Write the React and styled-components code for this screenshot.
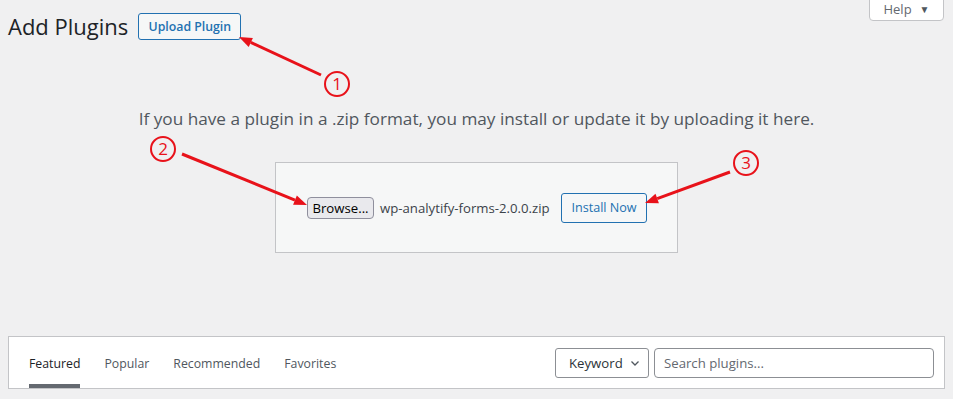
import React from 'react';
import styled, { createGlobalStyle } from 'styled-components';

const GlobalStyle = createGlobalStyle`
	body {
		margin: 0;
		background: #f0f0f1;
		font-family: "Open Sans", "Noto Sans", sans-serif;
		color: #3c434a;
	}
	* {
		box-sizing: border-box;
	}
`;

const Page = styled.div`
	position: relative;
	width: 953px;
	height: 399px;
	overflow: hidden;
	padding: 0 8px;
`;

const HeaderRow = styled.div`
	display: flex;
	align-items: flex-start;
	justify-content: space-between;
`;

const TitleGroup = styled.div`
	display: flex;
	align-items: center;
	gap: 10px;
	margin-top: 13px;
`;

const Title = styled.h1`
	margin: 0;
	font-size: 22px;
	font-weight: 400;
	color: #1d2327;
	line-height: 27px;
`;

const OutlineButton = styled.button`
	font-family: inherit;
	font-size: ${(p) => p.$size || 12.3}px;
	font-weight: ${(p) => (p.$bold ? 600 : 400)};
	color: #2271b1;
	background: #f6f7f7;
	border: 1px solid #2271b1;
	border-radius: 3px;
	width: ${(p) => p.$width}px;
	height: ${(p) => p.$height || 27}px;
	padding: 0;
	white-space: nowrap;
	cursor: pointer;
`;

const HelpTab = styled.button`
	margin-top: -8px;
	margin-right: 1px;
	width: 75px;
	height: 29px;
	padding-top: 6px;
	display: flex;
	align-items: center;
	justify-content: center;
	gap: 8px;
	background: #fff;
	border: 1px solid #c3c4c7;
	border-radius: 0 0 4px 4px;
	font-family: inherit;
	font-size: 13px;
	color: #646970;
`;

const Caret = styled.span`
	font-size: 10px;
	color: #50575e;
`;

const UploadSection = styled.div`
	display: flex;
	flex-direction: column;
	align-items: center;
`;

const UploadHelp = styled.p`
	margin: 67px 0 0;
	font-size: 17.2px;
	line-height: 24px;
	color: #50575e;
	white-space: nowrap;
`;

const UploadForm = styled.form`
	margin-top: 31px;
	width: 403px;
	height: 91px;
	display: flex;
	align-items: center;
	padding: 0 30px 0 31px;
	background: #f6f7f7;
	border: 1px solid #c3c4c7;
`;

const BrowseButton = styled.span`
	width: 67px;
	height: 22px;
	display: flex;
	align-items: center;
	justify-content: center;
	background: #e9e9ed;
	border: 1px solid #8f8f9d;
	border-radius: 4px;
	font-size: 13.2px;
	color: #000;
`;

const FileName = styled.span`
	flex: 1;
	margin-left: 6px;
	font-size: 13.2px;
	color: #3c434a;
	white-space: nowrap;
`;

const FilterBar = styled.div`
	margin-top: 83px;
	height: 53px;
	display: flex;
	align-items: stretch;
	justify-content: space-between;
	padding: 0 10px 0 20px;
	background: #fff;
	border: 1px solid #c3c4c7;
`;

const Tabs = styled.ul`
	display: flex;
	gap: 24px;
	margin: 0;
	padding: 0;
	list-style: none;
`;

const Tab = styled.li`
	display: flex;
	align-items: center;
	padding-top: 1px;
	font-size: 12.3px;
	color: ${(p) => (p.$current ? '#1d2327' : '#50575e')};
	border-bottom: 4px solid ${(p) => (p.$current ? '#646970' : 'transparent')};
	border-top: 4px solid transparent;
`;

const SearchForm = styled.div`
	display: flex;
	align-items: center;
	gap: 5px;
`;

const Select = styled.div`
	width: 94px;
	height: 30px;
	display: flex;
	align-items: center;
	justify-content: space-between;
	padding: 0 8px 0 13px;
	border: 1px solid #8c8f94;
	border-radius: 3px;
	font-size: 13.2px;
	color: #2c3338;
`;

const SearchInput = styled.input`
	width: 280px;
	height: 30px;
	padding: 0 9px;
	border: 1px solid #8c8f94;
	border-radius: 4px;
	font-family: inherit;
	font-size: 13.2px;
	color: #2c3338;
	&::placeholder {
		color: #646970;
	}
`;

const Annotations = styled.svg`
	position: absolute;
	left: 0;
	top: 0;
	pointer-events: none;
`;

const RED = '#e8121a';

const Marker = ({ cx, cy, n }) => (
	<g>
		<circle cx={cx} cy={cy} r={12} fill="none" stroke={RED} strokeWidth={2} />
		<text x={cx} y={cy + 6} textAnchor="middle" fontSize="17" fill={RED} fontFamily="Open Sans, sans-serif">
			{n}
		</text>
	</g>
);

const Arrow = ({ x1, y1, x2, y2 }) => {
	const a = Math.atan2(y2 - y1, x2 - x1);
	const len = 13;
	const w = 5;
	const bx = x2 - len * Math.cos(a);
	const by = y2 - len * Math.sin(a);
	const px = -Math.sin(a) * w;
	const py = Math.cos(a) * w;
	return (
		<g>
			<line x1={x1} y1={y1} x2={bx} y2={by} stroke={RED} strokeWidth={3} />
			<polygon points={`${x2},${y2} ${bx + px},${by + py} ${bx - px},${by - py}`} fill={RED} />
		</g>
	);
};

const App = () => {
	return (
		<Page>
			<GlobalStyle />
			<HeaderRow>
				<TitleGroup>
					<Title>Add Plugins</Title>
					<OutlineButton $bold $width={103}>Upload Plugin</OutlineButton>
				</TitleGroup>
				<HelpTab>
					Help <Caret>▼</Caret>
				</HelpTab>
			</HeaderRow>

			<UploadSection>
				<UploadHelp>If you have a plugin in a .zip format, you may install or update it by uploading it here.</UploadHelp>
				<UploadForm onSubmit={(e) => e.preventDefault()}>
					<BrowseButton>Browse...</BrowseButton>
					<FileName>wp-analytify-forms-2.0.0.zip</FileName>
					<OutlineButton $width={86} $height={30} $size={12.6} type="button">Install Now</OutlineButton>
				</UploadForm>
			</UploadSection>

			<FilterBar>
				<Tabs>
					<Tab $current>Featured</Tab>
					<Tab>Popular</Tab>
					<Tab>Recommended</Tab>
					<Tab>Favorites</Tab>
				</Tabs>
				<SearchForm>
					<Select>
						Keyword
						<svg width="10" height="10" viewBox="0 0 10 10">
							<path d="M1.5 3.5 L5 7 L8.5 3.5" fill="none" stroke="#50575e" strokeWidth="1.3" />
						</svg>
					</Select>
					<SearchInput placeholder="Search plugins..." />
				</SearchForm>
			</FilterBar>

			<Annotations width="953" height="399" viewBox="0 0 953 399">
				<Arrow x1={321} y1={75} x2={239} y2={37} />
				<Marker cx={337} cy={84} n="1" />
				<Arrow x1={182} y1={154} x2={307} y2={205} />
				<Marker cx={163} cy={149} n="2" />
				<Arrow x1={730} y1={172} x2={645} y2={203} />
				<Marker cx={746} cy={163} n="3" />
			</Annotations>
		</Page>
	);
};

export default App;
